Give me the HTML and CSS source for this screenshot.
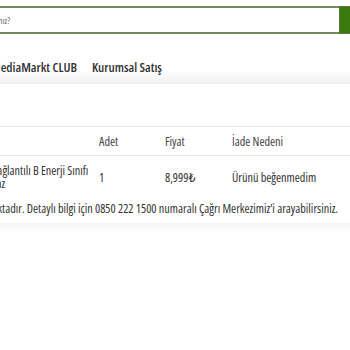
FILE: index.html
```html
<!DOCTYPE html>
<html lang="tr">
<head>
<meta charset="utf-8">
<link rel="stylesheet" href="styles.css">
</head>
<body>
<div class="page">
  <div class="search">
    <div class="search-box"><span class="placeholder">Ne aramıştınız?</span></div>
    <div class="search-btn"></div>
  </div>
  <nav class="nav">
    <a class="nav-item">MediaMarkt CLUB</a>
    <a class="nav-item">Kurumsal Satış</a>
  </nav>
  <div class="content">
    <table class="returns">
      <thead>
        <tr>
          <th class="c-prod">Ürün</th>
          <th class="c-qty">Adet</th>
          <th class="c-price">Fiyat</th>
          <th class="c-reason">İade Nedeni</th>
        </tr>
      </thead>
      <tbody>
        <tr>
          <td class="c-prod"><span class="prod-name">Samsung RB38 No Frost Wi-Fi Bağlantılı B Enerji Sınıfı<br>Kombi Tipi Buzdolabı İnoks Beyaz</span></td>
          <td class="c-qty">1</td>
          <td class="c-price">8,999₺</td>
          <td class="c-reason">Ürünü beğenmedim</td>
        </tr>
      </tbody>
    </table>
    <p class="note">İade talebiniz değerlendirme aşamasında bulunmaktadır. Detaylı bilgi için 0850 222 1500 numaralı Çağrı Merkezimiz’i arayabilirsiniz.</p>
  </div>
  <div class="footer-band"></div>
</div>
</body>
</html>
```
FILE: styles.css
```css
html, body {
  margin: 0;
  padding: 0;
  background: #fff;
}
body {
  font-family: "Open Sans", "DejaVu Sans", sans-serif;
  font-stretch: 75%;
  color: #333;
  overflow: hidden;
  width: 350px;
  height: 350px;
}
.page {
  margin-left: -300px;
  width: 700px;
  overflow: hidden;
}
.search {
  display: flex;
  margin-top: 6px;
  height: 28px;
  width: 660px;
}
.search-box {
  flex: 1;
  border: 2px solid #73895c;
  border-right: none;
  display: flex;
  align-items: center;
  box-sizing: border-box;
}
.placeholder {
  font-size: 9px;
  color: #666;
  margin-left: 261px;
}
.search-btn {
  width: 20px;
  background: #3a790c;
  border: 1px solid #5a7440;
  border-right: none;
}
.nav {
  display: flex;
  gap: 15px;
  height: 34px;
  margin-top: 16px;
  align-items: center;
  padding-left: 291px;
  background: linear-gradient(#fff 0, #fff 62%, #f1f1f1 100%);
  border-bottom: 1px solid #ececec;
  box-sizing: border-box;
}
.nav-item {
  font-size: 13px;
  font-weight: 600;
  color: #333;
}
.content {
  margin-top: 42px;
}
.returns {
  border-collapse: collapse;
  table-layout: fixed;
  width: 700px;
  font-size: 12.2px;
}
.returns th {
  font-weight: normal;
  text-align: left;
  height: 28px;
  padding: 0;
  border-top: 1px solid #e9e9e9;
  border-bottom: 1px solid #e9e9e9;
  color: #444;
}
.returns td {
  height: 42px;
  padding: 0;
  vertical-align: middle;
}
.c-prod { width: 399px; }
.c-qty { width: 66px; }
.c-price { width: 67px; }
.prod-name {
  display: block;
  white-space: nowrap;
  line-height: 13px;
  padding-left: 166px;
}
.note {
  font-size: 12.2px;
  margin: 2px 0 0;
  padding-left: 0;
  white-space: nowrap;
  text-align: right;
  width: 638px;
  color: #333;
}
.footer-band {
  height: 10px;
  margin-top: 6px;
  background: linear-gradient(#f3f3f3, #fff);
}
```
